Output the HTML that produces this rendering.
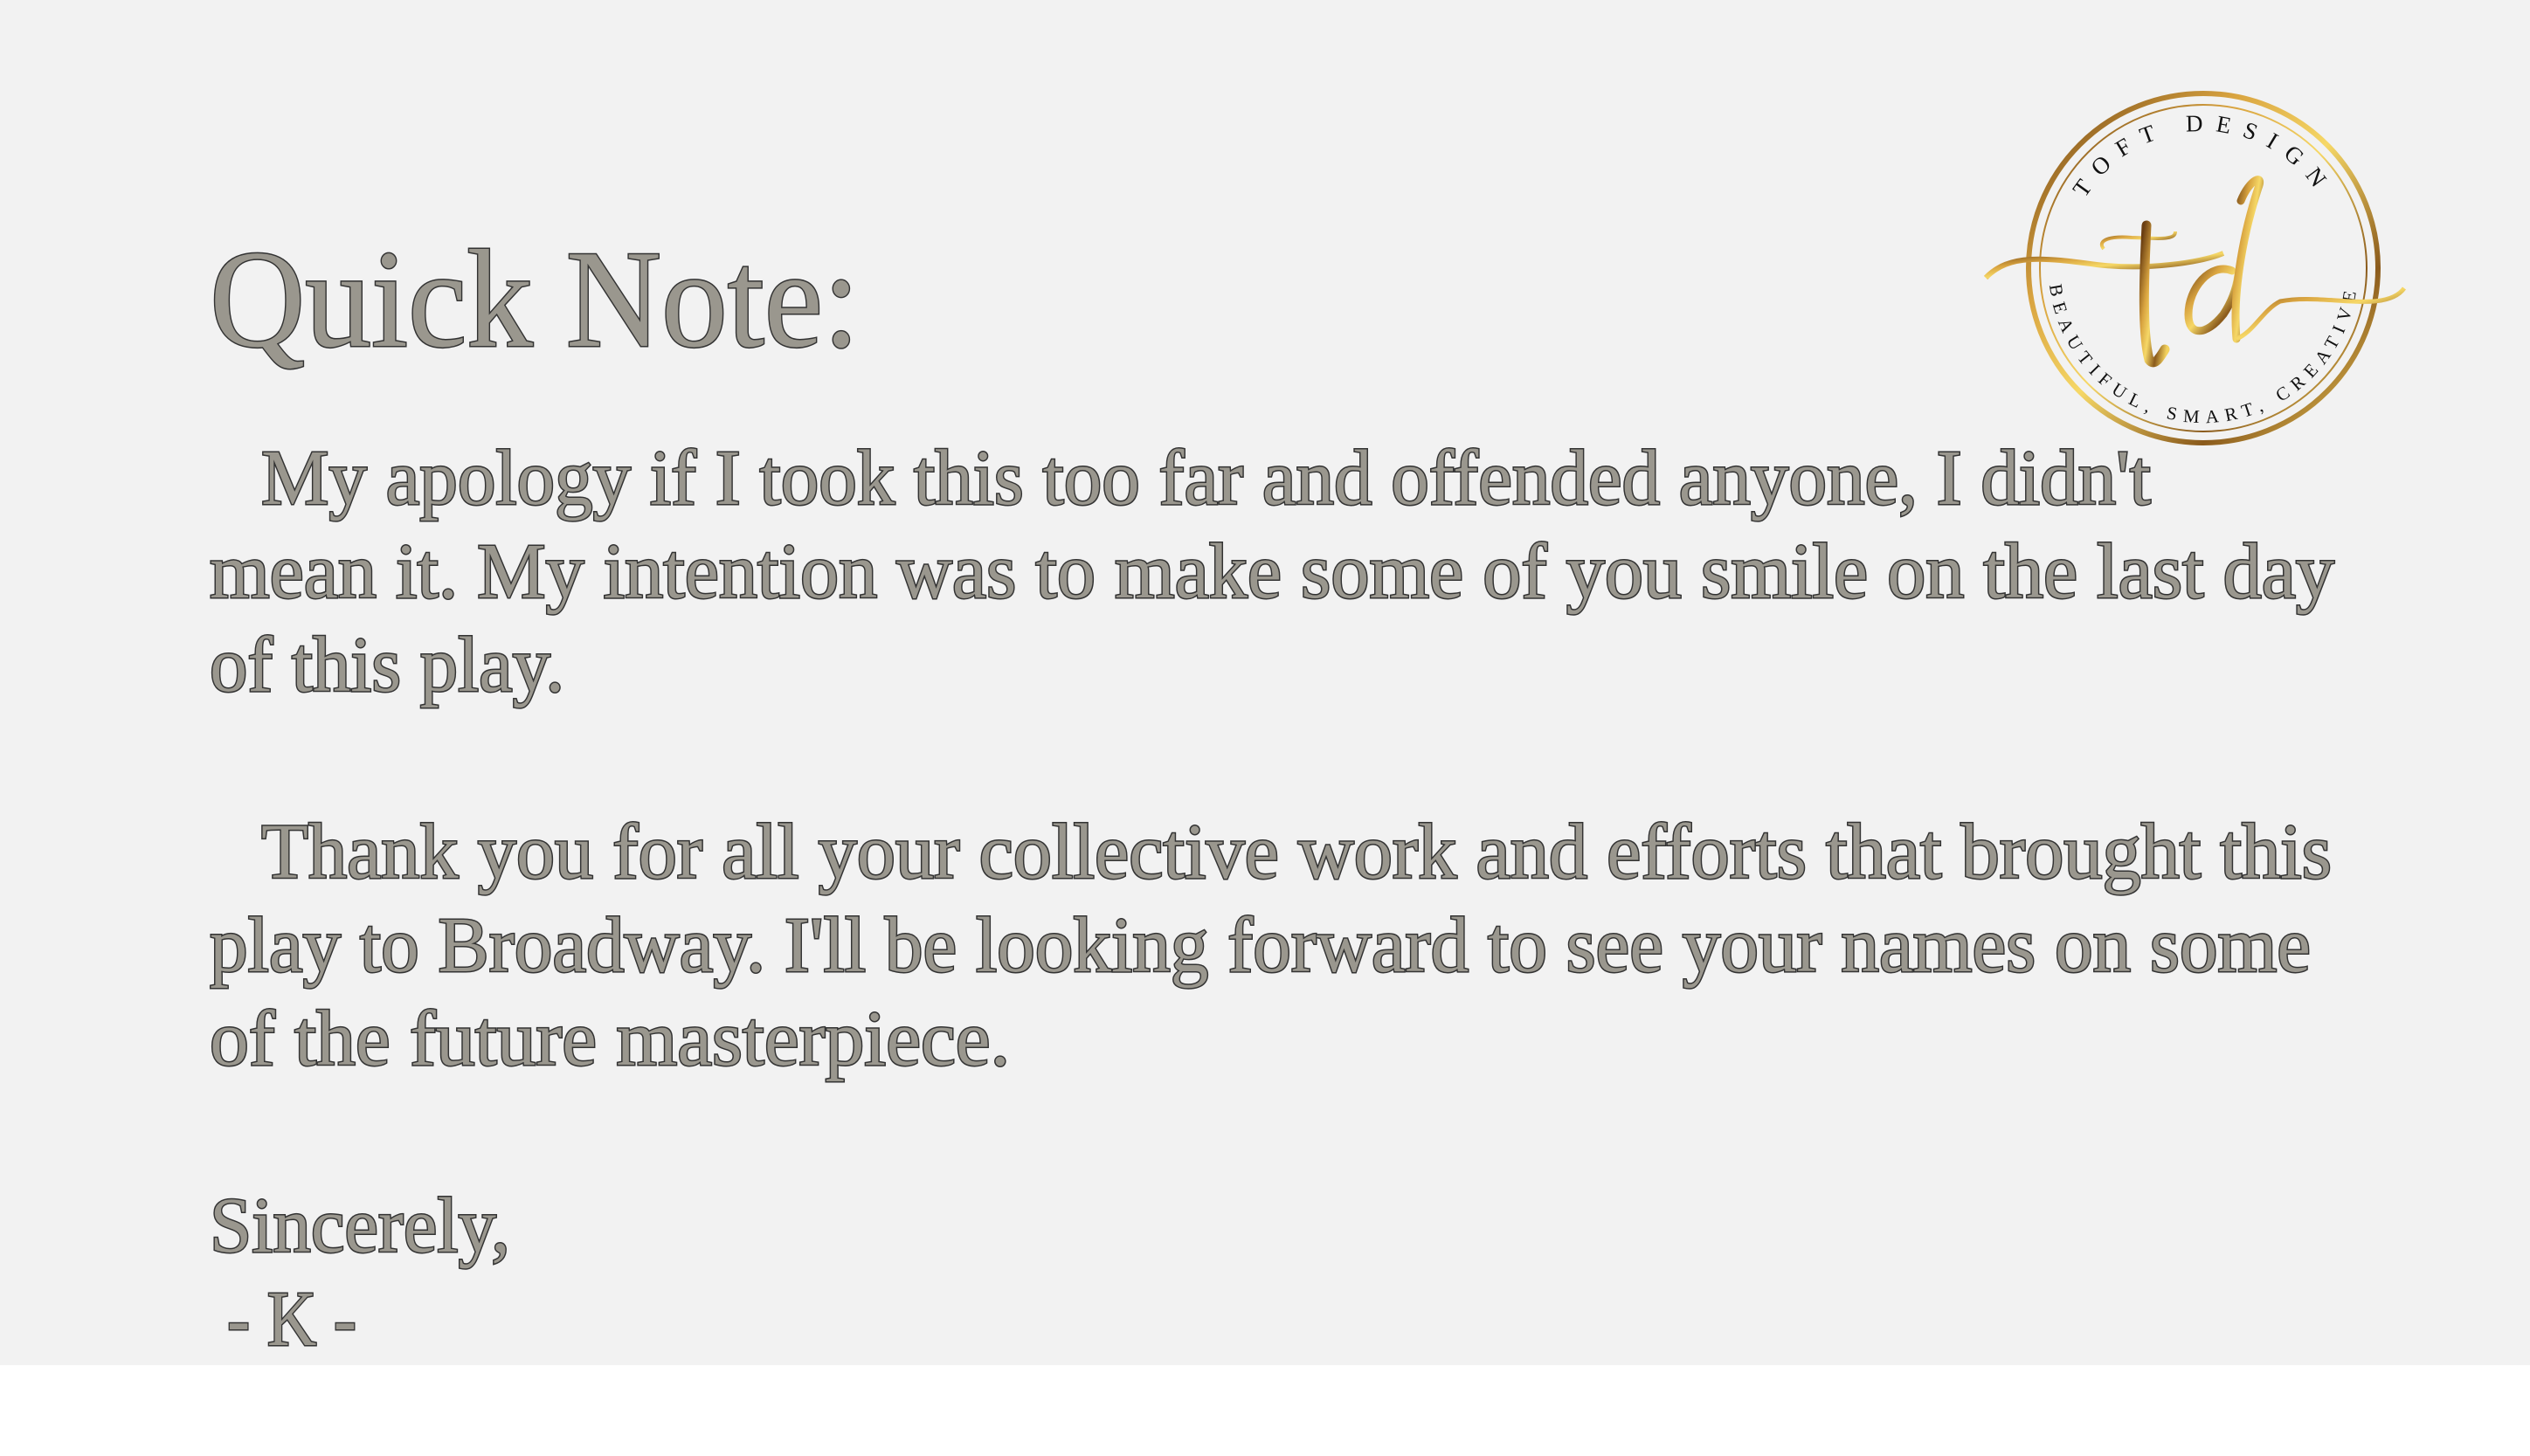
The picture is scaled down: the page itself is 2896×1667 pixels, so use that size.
<!DOCTYPE html>
<html><head><meta charset="utf-8"><style>
html,body{margin:0;padding:0;background:#fff;}
body{width:2896px;height:1667px;overflow:hidden;}
svg{display:block;}
</style></head><body>
<svg width="2896" height="1667" viewBox="0 0 2896 1667" xmlns="http://www.w3.org/2000/svg">
<defs>
<linearGradient id="g" x1="0" y1="0" x2="1" y2="1">
<stop offset="0" stop-color="#6b3f12"/><stop offset="0.3" stop-color="#d9a440"/><stop offset="0.5" stop-color="#f6d867"/><stop offset="0.75" stop-color="#8a5a1c"/><stop offset="1" stop-color="#f3d25e"/>
</linearGradient>
<path id="topArc" d="M2365,307 A157,157 0 0 1 2679,307"/>
<path id="botArc" d="M2345,307 A177,177 0 0 0 2699,307"/>
</defs>
<rect x="0" y="0" width="2896" height="1563" fill="#f2f2f2"/>
<g font-family="'Liberation Serif',serif" fill="#9a978e" stroke="#333" stroke-width="3" paint-order="stroke">
<text x="240" y="396" font-size="160" textLength="744" lengthAdjust="spacingAndGlyphs">Quick Note:</text>
<g font-size="90">
<text x="299" y="577" textLength="2163" lengthAdjust="spacingAndGlyphs">My apology if I took this too far and offended anyone, I didn't</text>
<text x="240" y="684" textLength="2432" lengthAdjust="spacingAndGlyphs">mean it. My intention was to make some of you smile on the last day</text>
<text x="240" y="791" textLength="406" lengthAdjust="spacingAndGlyphs">of this play.</text>
<text x="299" y="1005" textLength="2370" lengthAdjust="spacingAndGlyphs">Thank you for all your collective work and efforts that brought this</text>
<text x="240" y="1112" textLength="2405" lengthAdjust="spacingAndGlyphs">play to Broadway. I'll be looking forward to see your names on some</text>
<text x="240" y="1219" textLength="916" lengthAdjust="spacingAndGlyphs">of the future masterpiece.</text>
<text x="240" y="1433" textLength="344" lengthAdjust="spacingAndGlyphs">Sincerely,</text>
<text x="260" y="1540" textLength="148" lengthAdjust="spacingAndGlyphs">- K -</text>
</g>
</g>
<g>
<circle cx="2522" cy="307" r="200" fill="none" stroke="url(#g)" stroke-width="6"/>
<circle cx="2522" cy="307" r="187" fill="none" stroke="url(#g)" stroke-width="2"/>
<text font-family="'Liberation Serif',serif" font-size="27" fill="#111" letter-spacing="14"><textPath href="#topArc" startOffset="50%" text-anchor="middle">TOFT DESIGN</textPath></text>
<text font-family="'Liberation Serif',serif" font-size="21" fill="#111" letter-spacing="8"><textPath href="#botArc" startOffset="50%" text-anchor="middle" side="right">BEAUTIFUL, SMART, CREATIVE</textPath></text>
<path d="M2273,318 C2300,290 2340,295 2400,303 C2460,310 2520,300 2545,290" fill="none" stroke="url(#g)" stroke-width="6"/>
<path d="M2408,285 C2400,275 2415,270 2440,272 L2470,273 C2490,273 2490,268 2490,265" fill="none" stroke="url(#g)" stroke-width="4"/>
<path d="M2457,258 C2454,320 2452,380 2460,412 C2466,420 2472,410 2478,400" fill="none" stroke="url(#g)" stroke-width="11" stroke-linecap="round"/>
<path d="M2555,310 C2530,300 2505,330 2505,360 C2505,385 2525,385 2545,360 C2555,345 2560,330 2562,315" fill="none" stroke="url(#g)" stroke-width="9" stroke-linecap="round"/>
<path d="M2560,388 C2555,330 2570,260 2585,215 C2592,198 2575,205 2565,230" fill="none" stroke="url(#g)" stroke-width="9" stroke-linecap="round"/>
<path d="M2560,388 C2580,380 2590,355 2610,345 C2660,335 2730,360 2752,330" fill="none" stroke="url(#g)" stroke-width="5"/>
</g>
</svg>
</body></html>
